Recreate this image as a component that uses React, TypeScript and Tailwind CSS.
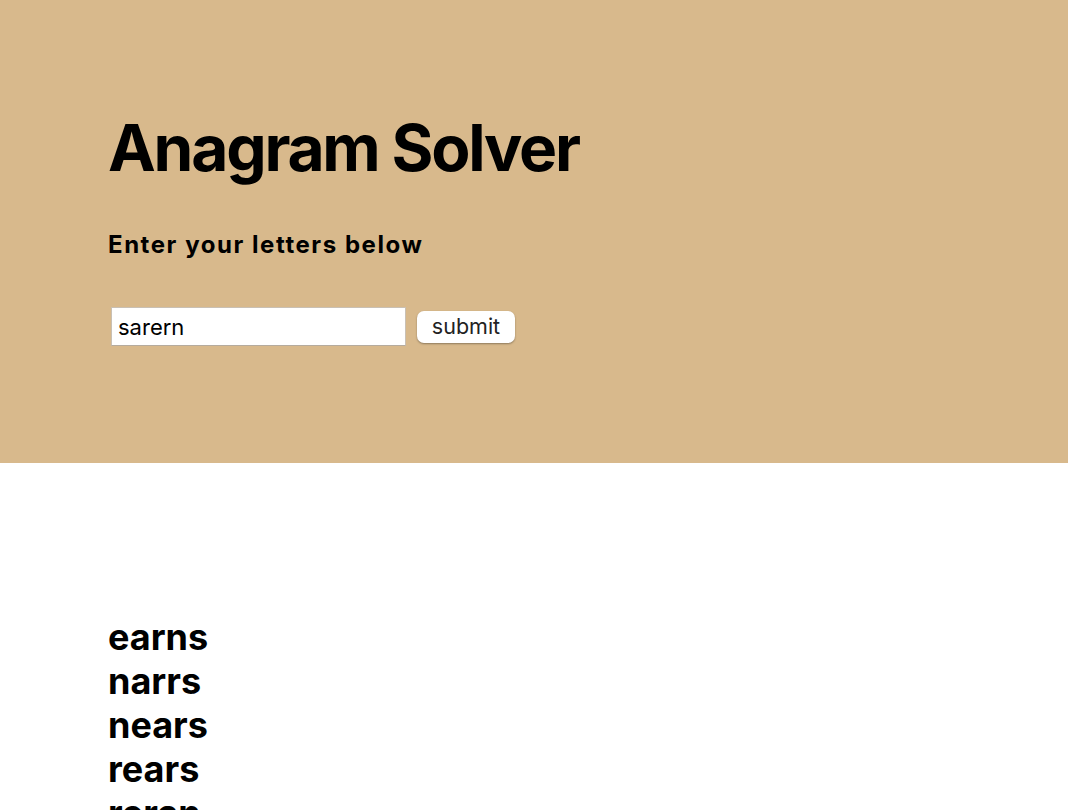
import React from "react";

const words = ["earns", "narrs", "nears", "rears", "reran", "snare"];

export default function App() {
  return (
    <div className="h-[810px] overflow-hidden bg-white" style={{ fontFamily: "Inter, 'Noto Sans', sans-serif" }}>
      <div className="h-[463px] bg-[#d8b98c] pl-[108px] pt-[116px]">
        <h1 className="text-[64px] leading-[64px] font-bold text-black tracking-[-2.2px]">Anagram Solver</h1>
        <h2 className="mt-[53px] text-[24px] leading-[24px] font-bold text-black tracking-[1.55px]">Enter your letters below</h2>
        <div className="mt-[50px] flex items-center pl-[3px]">
          <input
            defaultValue="sarern"
            className="w-[295px] h-[39px] bg-white border border-[#c9c0b4] border-b-[#b5ab9e] px-[6px] text-[22px] text-black outline-none"
            style={{ fontFamily: "Inter, sans-serif" }}
          />
          <button className="ml-[11px] w-[98px] h-[32px] bg-white rounded-[7px] text-[21.5px] text-[#222] shadow-[0_1px_2px_rgba(0,0,0,0.35)] leading-none">
            submit
          </button>
        </div>
      </div>
      <div className="pl-[108px] pt-[152px]">
        {words.map((w) => (
          <div key={w} className="text-[36px] leading-[44px] font-bold text-black">
            {w}
          </div>
        ))}
      </div>
    </div>
  );
}
